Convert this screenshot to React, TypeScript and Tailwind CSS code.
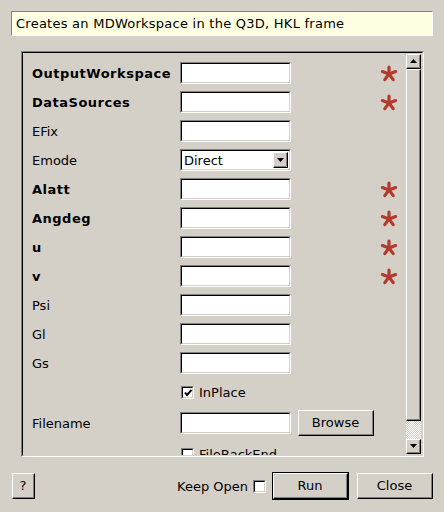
import React from "react";

const Sunken = ({ className = "", children }: { className?: string; children?: React.ReactNode }) => (
  <div className={`border-t border-l border-t-[#808080] border-l-[#808080] border-b border-r border-b-white border-r-white ${className}`}>
    <div className="h-full w-full border-t border-l border-t-black border-l-black border-b border-r border-b-[#d4d0c8] border-r-[#d4d0c8] bg-white">
      {children}
    </div>
  </div>
);

const Raised = ({ className = "", children, inner = "" }: { className?: string; children?: React.ReactNode; inner?: string }) => (
  <div className={`border-t border-l border-t-white border-l-white border-b border-r border-b-black border-r-black bg-[#d4d0c8] ${className}`}>
    <div className={`h-full w-full border-b border-r border-b-[#808080] border-r-[#808080] flex items-center justify-center ${inner}`}>
      {children}
    </div>
  </div>
);

const Star = () => (
  <svg width="18" height="17" viewBox="0 0 18 17" className="shrink-0">
    <g stroke="#b23b2b" strokeWidth="3.2" strokeLinecap="round">
      <line x1="9" y1="9" x2="9" y2="2" />
      <line x1="9" y1="9" x2="2.4" y2="6.6" />
      <line x1="9" y1="9" x2="15.6" y2="6.6" />
      <line x1="9" y1="9" x2="4.8" y2="14.6" />
      <line x1="9" y1="9" x2="13.2" y2="14.6" />
    </g>
  </svg>
);

const Check = ({ checked }: { checked?: boolean }) => (
  <Sunken className="w-[13px] h-[13px] shrink-0">
    {checked && (
      <svg width="11" height="11" viewBox="0 0 11 11" className="block">
        <polyline points="2,4.5 4,7 8.5,1.8" fill="none" stroke="black" strokeWidth="2" />
      </svg>
    )}
  </Sunken>
);

type Row = { label: string; bold?: boolean; req?: boolean; type?: "text" | "combo" | "check" | "file"; checked?: boolean };

const rows: Row[] = [
  { label: "OutputWorkspace", bold: true, req: true },
  { label: "DataSources", bold: true, req: true },
  { label: "EFix" },
  { label: "Emode", type: "combo" },
  { label: "Alatt", bold: true, req: true },
  { label: "Angdeg", bold: true, req: true },
  { label: "u", bold: true, req: true },
  { label: "v", bold: true, req: true },
  { label: "Psi" },
  { label: "Gl" },
  { label: "Gs" },
  { label: "InPlace", type: "check", checked: true },
  { label: "Filename", type: "file" },
  { label: "FileBackEnd", type: "check" },
];

export default function App() {
  return (
    <div className="w-[444px] h-[512px] bg-[#d4d0c8] flex flex-col font-['DejaVu_Sans',sans-serif] text-[13px] text-black overflow-hidden">
      <div className="mt-[11px] mx-[11px] h-[25px] border border-t-[#808080] border-l-[#808080] border-b-white border-r-white bg-[#ffffe1] flex items-center pl-[4px] pt-[1px] tracking-[0.25px]">
        Creates an MDWorkspace in the Q3D, HKL frame
      </div>

      <div className="mt-[15px] ml-[21px] w-[403px] h-[406px] border-t border-l border-t-[#808080] border-l-[#808080] border-b border-r border-b-white border-r-white">
        <div className="h-full w-full border-t border-l border-t-black border-l-black border-b border-r border-b-[#d4d0c8] border-r-[#d4d0c8] flex">
          <div className="flex-1 overflow-hidden pt-[9px] pl-[9px] flex flex-col gap-[7px]">
            {rows.map((r) => {
              if (r.type === "check") {
                return (
                  <div key={r.label} className="flex items-center h-[22px] shrink-0">
                    <div className="ml-[149px]">
                      <Check checked={r.checked} />
                    </div>
                    <span className="ml-[5px] pt-[1px]">{r.label}</span>
                  </div>
                );
              }
              return (
                <div key={r.label} className={`flex items-center ${r.type === "file" ? "h-[26px]" : "h-[22px]"} shrink-0`}>
                  <div className={`w-[148px] shrink-0 pt-[2px] ${r.bold ? "font-bold tracking-[0.5px]" : ""}`}>{r.label}</div>
                  {r.type === "combo" ? (
                    <Sunken className="w-[111px] h-[22px] shrink-0">
                      <div className="flex items-center h-full">
                        <span className="pl-[2px] pt-[1px] flex-1">Direct</span>
                        <Raised className="w-[15px] h-[16px] mr-[1px]">
                          <svg width="7" height="4" viewBox="0 0 7 4">
                            <polygon points="0,0 7,0 3.5,4" fill="black" />
                          </svg>
                        </Raised>
                      </div>
                    </Sunken>
                  ) : (
                    <Sunken className="w-[111px] h-[22px] shrink-0" />
                  )}
                  {r.type === "file" && (
                    <Raised className="ml-[7px] w-[76px] h-[26px]" inner="pt-[1px]">Browse</Raised>
                  )}
                  {r.req && (
                    <div className="ml-[89px]">
                      <Star />
                    </div>
                  )}
                </div>
              );
            })}
          </div>
          <div className="w-[15px] mt-[1px] mb-[1px] mr-[1px] flex flex-col">
            <Raised className="h-[15px] shrink-0">
              <svg width="7" height="4" viewBox="0 0 7 4">
                <polygon points="0,4 7,4 3.5,0" fill="black" />
              </svg>
            </Raised>
            <Raised className="flex-1" />
            <div className="h-[18px] shrink-0 bg-[repeating-conic-gradient(#ffffff_0_25%,#d4d0c8_0_50%)] bg-[length:2px_2px]" />
            <Raised className="h-[15px] shrink-0">
              <svg width="7" height="4" viewBox="0 0 7 4">
                <polygon points="0,0 7,0 3.5,4" fill="black" />
              </svg>
            </Raised>
          </div>
        </div>
      </div>

      <div className="mt-[15px] h-[28px] flex items-center pl-[12px] pr-[11px]">
        <Raised className="w-[23px] h-[26px]" inner="pt-[1px]">?</Raised>
        <div className="flex-1" />
        <span className="pt-[1px]">Keep Open</span>
        <div className="ml-[5px]">
          <Check />
        </div>
        <div className="ml-[6px] border border-black">
          <Raised className="w-[75px] h-[26px]" inner="pt-[1px]">Run</Raised>
        </div>
        <Raised className="ml-[8px] w-[76px] h-[26px]" inner="pt-[1px]">Close</Raised>
      </div>
    </div>
  );
}
